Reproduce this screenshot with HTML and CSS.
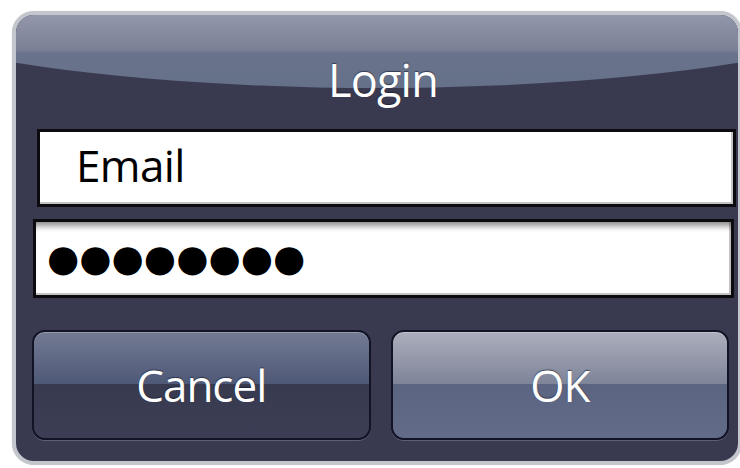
FILE: index.html
```html
<!DOCTYPE html>
<html lang="en">
<head>
<meta charset="utf-8">
<title>Login</title>
<link rel="stylesheet" href="styles.css">
</head>
<body>
<div class="dialog">
  <div class="gloss"></div>
  <h1 class="title">Login</h1>
  <div class="field field-email"><span class="field-text">Email</span></div>
  <div class="field field-password"><span class="dots">●●●●●●●●</span></div>
  <div class="actions">
    <button class="btn btn-cancel">Cancel</button>
    <button class="btn btn-ok">OK</button>
  </div>
</div>
</body>
</html>
```
FILE: styles.css
```css
html, body {
  margin: 0;
  padding: 0;
  background: #ffffff;
}

body {
  width: 740px;
  height: 468px;
  overflow: hidden;
  font-family: "Open Sans", "Noto Sans", sans-serif;
}

/* outer dialog frame */
.dialog {
  position: relative;
  box-sizing: border-box;
  margin: 11px 0 0 12px;
  width: 730px;
  height: 454px;
  border: 4px solid #c3c6cc;
  border-radius: 22px;
  background: #393a50;
  overflow: hidden;
  display: flex;
  flex-direction: column;
  box-shadow: 0 0 1px rgba(0, 0, 0, 0.25);
}

/* glossy curved highlight behind the title */
.gloss {
  position: absolute;
  left: 50%;
  top: -177px;
  width: 1200px;
  height: 250px;
  margin-left: -600px;
  border-radius: 50%;
  background: linear-gradient(to bottom,
    #9297ab 0%,
    #9297ab 70.8%,
    #7b8096 84.6%,
    #6a738c 86.2%,
    #657089 100%);
  pointer-events: none;
}

.title {
  position: relative;
  margin: 0;
  padding: 39px 0 0 12px;
  height: 52px;
  line-height: 52px;
  margin-bottom: 23px;
  text-align: center;
  font-size: 45px;
  font-weight: 400;
  letter-spacing: -0.8px;
  color: #ffffff;
  text-shadow: 0 -1px 1px rgba(20, 22, 40, 0.6);
}

.field {
  position: relative;
  box-sizing: border-box;
  border: 3px solid #0b0b10;
  background: #ffffff;
}

.field-email {
  height: 78px;
  margin: 0 2px 0 21px;
  padding: 0 0 6px 36px;
  line-height: 66px;
  font-size: 44px;
  letter-spacing: -0.6px;
  color: #000000;
  box-shadow: inset -2px -2px 0 #c4c4c4;
}

.field-password {
  height: 79px;
  margin: 12px 4px 0 17px;
  padding: 0 0 0 11px;
  display: flex;
  align-items: center;
  box-shadow: inset 0 9px 6px -5px rgba(0, 0, 0, 0.45), inset -2px -2px 0 #c4c4c4;
}

.dots {
  font-family: "DejaVu Sans", sans-serif;
  font-size: 37px;
  line-height: 1;
  letter-spacing: 0;
  color: #000000;
}

.actions {
  display: flex;
  gap: 20px;
  margin: 32px 9px 0 16px;
  height: 110px;
}

.btn {
  flex: 1;
  box-sizing: border-box;
  height: 110px;
  border: 2px solid #121325;
  border-radius: 13px;
  font-family: "Open Sans", "Noto Sans", sans-serif;
  font-size: 44px;
  letter-spacing: -1px;
  color: #ffffff;
  text-shadow: 0 -1px 1px rgba(20, 22, 40, 0.6);
  padding: 0;
  box-shadow: 0 1px 0 rgba(120, 125, 155, 0.55), inset 0 1px 0 rgba(255, 255, 255, 0.25);
}

.btn-cancel {
  background: linear-gradient(to bottom,
    #737a93 0%,
    #4e5977 49%,
    #383a50 49%,
    #3c3e55 100%);
}

.btn-ok {
  background: linear-gradient(to bottom,
    #abaebc 0%,
    #7e8499 49%,
    #5b6480 49%,
    #626b87 100%);
}
```
